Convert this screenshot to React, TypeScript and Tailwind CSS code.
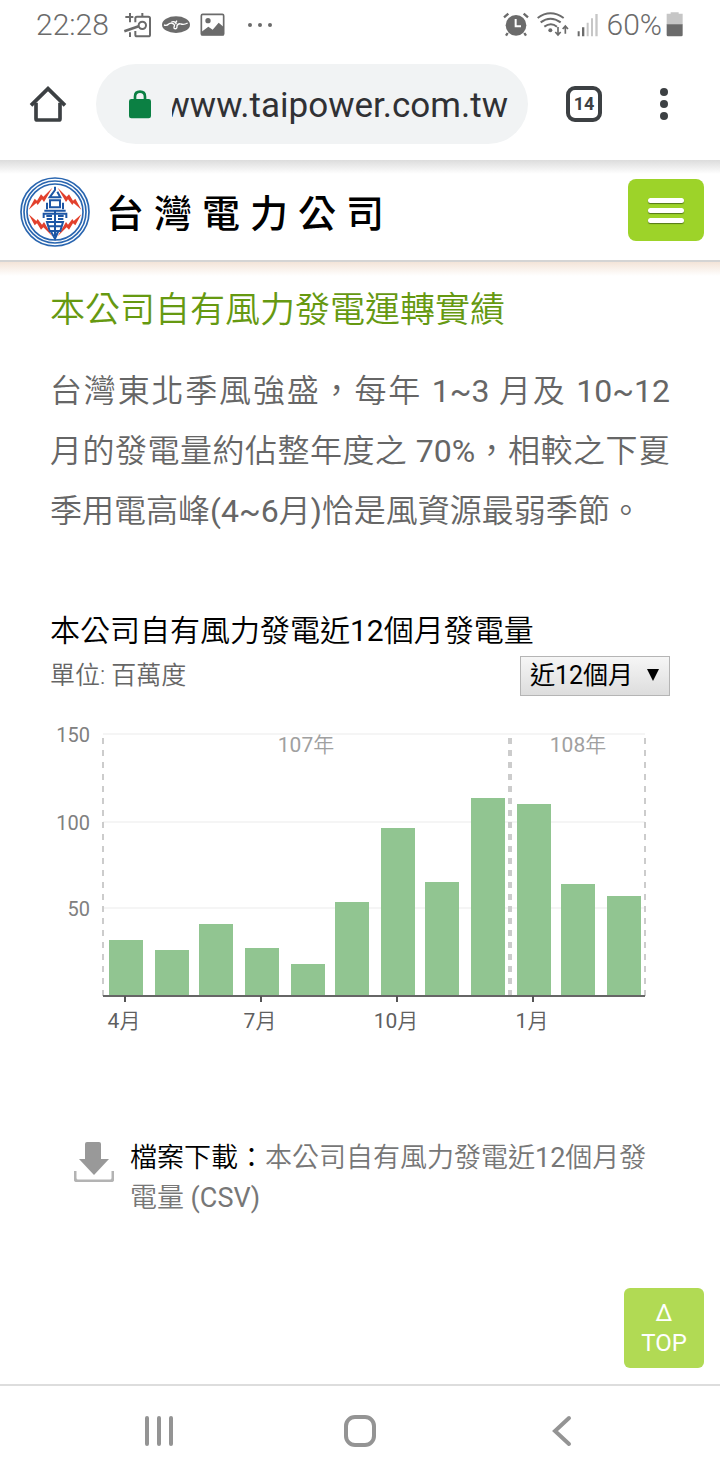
import React from "react";

const bars = [
  { x: 109, top: 940 },
  { x: 155, top: 950 },
  { x: 199, top: 924 },
  { x: 245, top: 948 },
  { x: 291, top: 964 },
  { x: 335, top: 902 },
  { x: 381, top: 828 },
  { x: 425, top: 882 },
  { x: 471, top: 798 },
  { x: 517, top: 804 },
  { x: 561, top: 884 },
  { x: 607, top: 896 },
];

const gridLines = [
  { y: 735, label: "150" },
  { y: 823, label: "100" },
  { y: 909, label: "50" },
];

const ticks = [
  { x: 125, month: "4" },
  { x: 261, month: "7" },
  { x: 397, month: "10" },
  { x: 533, month: "1" },
];

const years = [
  { x: 306, year: "107" },
  { x: 578, year: "108" },
];

const nameChars = ["台", "灣", "電", "力", "公", "司"];

// Latin letters and digits are set one weight heavier than the Chinese text around them.
function Mixed({ text }: { text: string }) {
  return (
    <>
      {text.split(/([!-~]+)/).map((part, i) =>
        i % 2 === 1 ? (
          <span key={i} className="font-normal">
            {part}
          </span>
        ) : (
          part
        ),
      )}
    </>
  );
}

function StatusBar() {
  return (
    <div className="flex h-12 items-center justify-between pl-9 pr-9 pt-0.5 text-[#6b6b6b]">
      <div className="flex items-center">
        <span className="text-[30px] font-[350] leading-9">22:28</span>
        <svg className="ml-3.5 h-7 w-[30px]" viewBox="366 32 90 84" fill="none" stroke="currentColor" aria-hidden="true">
          <path d="M373 50h24M387 38v28M387 96v14" strokeWidth="6" />
          <path d="M370 93l43-15" strokeWidth="8" />
          <path d="M403 66V54q0-5 5-5h34q5 0 5 5v49q0 5-5 5h-34q-5 0-5-5V92M424 38v12" strokeWidth="6" />
          <circle cx="424" cy="75" r="11" strokeWidth="6" />
        </svg>
        <svg className="ml-2 h-7 w-[30px]" viewBox="481 32 88 84" fill="none" aria-hidden="true">
          <ellipse cx="525" cy="73" rx="42" ry="25" fill="currentColor" />
          <path d="M489 74q9 3 14-3 7-5 13-1 7 4 3 10-1 6 6 5 4-3 3-9 4-8 12-5 9 3 20-3M511 65q8-3 13 2M528 61q-6 7-2 11" stroke="white" strokeWidth="4" />
        </svg>
        <svg className="ml-2 h-7 w-7" viewBox="598 31 84 84" fill="none" aria-hidden="true">
          <rect x="605" y="41" width="67" height="62" rx="4" stroke="currentColor" strokeWidth="5" />
          <path d="M606 93l20-15 13 9 18-21 15 13v25h-66z" fill="currentColor" />
          <circle cx="625" cy="60" r="8" fill="currentColor" />
        </svg>
        <svg className="ml-4 h-2 w-8" viewBox="0 0 32 8" fill="currentColor" aria-hidden="true">
          <circle cx="7" cy="4" r="2" />
          <circle cx="17" cy="4" r="2" />
          <circle cx="27" cy="4" r="2" />
        </svg>
      </div>
      <div className="flex items-center">
        <svg className="h-7 w-[26px]" viewBox="39 32 78 84" fill="none" stroke="currentColor" aria-hidden="true">
          <circle cx="78" cy="75" r="31" fill="currentColor" stroke="none" />
          <path d="M42 51l13-11M114 51l-13-11M53 98l-5 8M103 98l5 8" strokeWidth="7" />
          <path d="M77 56v22h16" stroke="white" strokeWidth="6" />
        </svg>
        <svg className="ml-2 h-7 w-8" viewBox="142 32 96 84" fill="none" stroke="currentColor" strokeWidth="6" aria-hidden="true">
          <path d="M144 53q38-28 78 0M153 66q29-22 60 0M164 79q20-14 38 0" />
          <circle cx="182" cy="90" r="6" fill="currentColor" stroke="none" />
          <path d="M205 80v23M197 95l8 9 8-9M227 100V78M219 86l8-9 8 9" strokeWidth="5" />
        </svg>
        <svg className="ml-2 h-7 w-[22px]" viewBox="256 32 66 84" aria-hidden="true">
          <path d="M258 93h6v15h-6zM271 81h7v27h-7z" fill="#6b6b6b" />
          <path d="M285 67h6v41h-6zM298 54h6v54h-6zM311 41h7v67h-7z" fill="#c6c6c6" />
        </svg>
        <span className="ml-2 text-[30px] font-[350] leading-9">60%</span>
        <svg className="ml-1 h-7 w-[18px]" viewBox="532 32 54 84" aria-hidden="true">
          <path d="M534 40h12v-4h24v4h12v33h-48z" fill="#c6c6c6" />
          <path d="M534 72h48v32q0 4-4 4h-40q-4 0-4-4z" fill="#6b6b6b" />
        </svg>
      </div>
    </div>
  );
}

function BrowserBar() {
  return (
    <div className="flex h-28 items-center pl-7 pr-[38px]">
      <button type="button" aria-label="首頁" className="shrink-0">
        <svg className="h-10 w-10" viewBox="84 252 120 120" fill="none" stroke="#3c4043" strokeWidth="11" aria-hidden="true">
          <path d="M93 316l51-50 51 50" />
          <path d="M108 308v48q0 4 4 4h64q4 0 4-4v-48" />
        </svg>
      </button>
      <div className="ml-7 flex h-20 min-w-0 flex-1 items-center rounded-full bg-[#f1f3f4] pl-8 pr-5">
        <svg className="h-[30px] w-6 shrink-0" viewBox="384 264 72 90" fill="none" aria-hidden="true">
          <rect x="387" y="294" width="66" height="58" rx="7" fill="#0b8043" />
          <path d="M405 298v-11q0-15 15-15t15 15v11" stroke="#0b8043" strokeWidth="8" />
        </svg>
        <div className="ml-5 flex min-w-0 flex-1 justify-end overflow-hidden pt-1">
          <span className="text-[35px] leading-[48px] text-[#303134]">www.taipower.com.tw</span>
        </div>
      </div>
      <button
        type="button"
        aria-label="分頁"
        className="ml-[38px] flex h-9 w-9 shrink-0 items-center justify-center rounded-[9px] border-4 border-[#3c4043] text-[18px] font-bold leading-6 text-[#3c4043]"
      >
        14
      </button>
      <button type="button" aria-label="選單" className="ml-11 shrink-0">
        <svg className="h-9 w-9" viewBox="0 0 36 36" fill="#3c4043" aria-hidden="true">
          <circle cx="18" cy="6" r="4" />
          <circle cx="18" cy="18" r="4" />
          <circle cx="18" cy="30" r="4" />
        </svg>
      </button>
    </div>
  );
}

function Emblem() {
  return (
    <svg className="h-[70px] w-[70px] shrink-0" viewBox="15 11 210 210" fill="none" aria-hidden="true">
      <g stroke="#2a66b0">
        <circle cx="120" cy="116" r="102" strokeWidth="5" />
        <circle cx="120" cy="116" r="93" strokeWidth="5" />
        <circle cx="120" cy="116" r="84" strokeWidth="5" />
      </g>
      <g fill="#e2402c">
        <path d="M112 43L87 86l-6-8-13 17-4-6-23 20 18-33 7 6 12-19 7 7z" />
        <path d="M128 43l25 43 6-8 13 17 4-6 23 20-18-33-7 6-12-19-7 7z" />
        <path d="M112 189l-25-43-6 8-13-17-4 6-23-20 18 33 7-6 12 19 7-7z" />
        <path d="M128 189l25-43 6 8 13-17 4 6 23-20-18 33-7-6-12 19-7-7z" />
      </g>
      <g stroke="#1d56a5" strokeWidth="6">
        <path d="M120 40v10l-16 22h32l-9-17" />
        <path d="M105 81h30v21h-30zM96 88v20M144 88v20" />
        <path d="M88 112h64M86 134v-13h68v13M120 112v76M94 128h17M129 128h17M95 137h16M129 137h16" />
        <path d="M96 146h48l-8 27h-32zM100 159h40M107 173l13 23 10-23" />
      </g>
    </svg>
  );
}

function SiteHeader() {
  return (
    <header className="flex h-[102px] items-center justify-between border-b-2 border-[#d4d4d4] bg-linear-to-b from-[#dcdcdc] via-white via-[14%] to-white pl-5 pr-4">
      <a href="#home" aria-label="台灣電力公司" className="flex items-center pt-1">
        <Emblem />
        <span className="ml-4 flex gap-2.5 pt-1 text-[38px] font-medium leading-[60px] text-black">
          {nameChars.map((c) => (
            <span key={c}>{c}</span>
          ))}
        </span>
      </a>
      <button
        type="button"
        aria-label="主選單"
        className="flex h-[62px] w-[76px] flex-col items-center justify-center gap-[5px] rounded-lg bg-[#9dd329]"
      >
        <span className="h-[5px] w-9 rounded-sm bg-white shadow-[0_1px_1px_#55761a]" />
        <span className="h-[5px] w-9 rounded-sm bg-white shadow-[0_1px_1px_#55761a]" />
        <span className="h-[5px] w-9 rounded-sm bg-white shadow-[0_1px_1px_#55761a]" />
      </button>
    </header>
  );
}

function Chart() {
  return (
    <svg className="mt-6 w-full" viewBox="50 720 620 320" role="img" aria-label="近12個月發電量">
      {gridLines.map((g) => (
        <g key={g.label}>
          <line x1="103" x2="645" y1={g.y - 1} y2={g.y - 1} stroke="#f5f5f5" strokeWidth="2" />
          <text x="90" y={g.y + 7} textAnchor="end" fontSize="20" fill="#808080">
            {g.label}
          </text>
        </g>
      ))}
      {bars.map((b) => (
        <rect key={b.x} x={b.x} y={b.top} width="34" height={996 - b.top} fill="#91c591" />
      ))}
      <path d="M103 738v258M645 738v258" stroke="#cccccc" strokeWidth="2" strokeDasharray="6 6" />
      <path d="M510 738v258" stroke="#cccccc" strokeWidth="4" strokeDasharray="6 6" />
      <path d="M103 996h542" stroke="#666666" strokeWidth="2" />
      {ticks.map((t) => (
        <g key={t.month}>
          <path d={`M${t.x} 996v6`} stroke="#555555" strokeWidth="2" />
          <text x={t.x - 1} y="1028" textAnchor="middle" fontSize="21" fontWeight="350" fill="#5f5f5f">
            <tspan fontWeight="400">{t.month}</tspan>月
          </text>
        </g>
      ))}
      {years.map((y) => (
        <text key={y.year} x={y.x} y="752" textAnchor="middle" fontSize="21" fontWeight="350" fill="#a0a0a0">
          <tspan fontWeight="400">{y.year}</tspan>年
        </text>
      ))}
    </svg>
  );
}

function SystemNav() {
  return (
    <nav className="grid h-24 grid-cols-[1fr_84px_1fr] items-center border-t-2 border-[#dddddd] pb-1 text-[#949494]">
      <button type="button" aria-label="最近使用" className="justify-self-center">
        <svg className="h-9 w-9" viewBox="0 0 36 36" stroke="currentColor" strokeWidth="4" strokeLinecap="round" aria-hidden="true">
          <path d="M6 5v26M18 5v26M30 5v26" />
        </svg>
      </button>
      <button type="button" aria-label="主畫面" className="justify-self-center">
        <svg className="h-9 w-9" viewBox="0 0 36 36" fill="none" stroke="currentColor" strokeWidth="4" aria-hidden="true">
          <rect x="4" y="4" width="28" height="28" rx="9" />
        </svg>
      </button>
      <button type="button" aria-label="返回" className="justify-self-center">
        <svg className="h-9 w-9" viewBox="0 0 36 36" fill="none" stroke="currentColor" strokeWidth="4" strokeLinecap="round" aria-hidden="true">
          <path d="M26 5L12 18l14 13" />
        </svg>
      </button>
    </nav>
  );
}

export default function App() {
  return (
    <div className="flex min-h-screen flex-col bg-white font-['Roboto','Noto_Sans_CJK_TC',sans-serif]">
      <StatusBar />
      <BrowserBar />
      <SiteHeader />
      <main className="relative flex-1 bg-linear-to-b from-[#f3e4d8] to-white to-[14px] px-[50px] pt-[25px]">
        <h1 className="text-[35px] font-[350] leading-[48px] text-[#669911]">本公司自有風力發電運轉實績</h1>
        <p className="mt-[26px] text-justify text-[32px] font-[350] leading-[60px] text-[#666666]">
          <Mixed text="台灣東北季風強盛，每年 1~3 月及 10~12 月的發電量約佔整年度之 70%，相較之下夏季用電高峰(4~6月)恰是風資源最弱季節。" />
        </p>
        <section className="mt-[66px]">
          <h2 className="text-[30px] font-[350] leading-[48px] text-black">
            <Mixed text="本公司自有風力發電近12個月發電量" />
          </h2>
          <div className="mt-px flex items-center justify-between">
            <span className="text-[25px] font-[350] leading-10 text-[#666666]">單位: 百萬度</span>
            <div className="relative">
              <select
                aria-label="期間"
                className="h-10 w-[150px] appearance-none border border-[#b5b5b5] bg-linear-to-b from-[#f6f6f6] to-[#dddddd] pl-[9px] text-[25px] leading-9 text-black"
              >
                <option>近12個月</option>
              </select>
              <svg className="pointer-events-none absolute right-[11px] top-[13px] h-3 w-3" viewBox="0 0 12 12" aria-hidden="true">
                <path d="M0 0h12L6 12z" fill="black" />
              </svg>
            </div>
          </div>
          <Chart />
        </section>
        <div className="mt-[98px] flex pl-6">
          <svg className="mt-1 h-10 w-10 shrink-0" viewBox="0 0 40 40" aria-hidden="true">
            <path d="M11 2q0-2 2-2h12q2 0 2 2v15h8L20 33 5 17h6z" fill="#999999" />
            <path d="M1 29v7q0 3 3 3h32q3 0 3-3v-7" fill="none" stroke="#b3b3b3" strokeWidth="3" />
          </svg>
          <p className="ml-4 text-[27px] font-[350] leading-10 text-black">
            檔案下載：
            <a href="#csv" className="text-[#777777]">
              <Mixed text="本公司自有風力發電近12個月發電量 (CSV)" />
            </a>
          </p>
        </div>
        <a
          href="#top"
          className="absolute bottom-4 right-4 flex h-20 w-20 flex-col items-center justify-center rounded-md bg-[#b1da54] text-[24px] leading-[30px] text-white"
        >
          <span>Δ</span>
          <span>TOP</span>
        </a>
      </main>
      <SystemNav />
    </div>
  );
}
